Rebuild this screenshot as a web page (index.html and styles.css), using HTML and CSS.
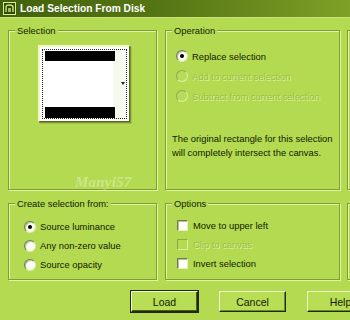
FILE: index.html
```
<!DOCTYPE html>
<html>
<head>
<meta charset="utf-8">
<link rel="stylesheet" href="styles.css">
</head>
<body>
<div class="window">
  <div class="titlebar">
    <svg class="ticon" width="13" height="13" viewBox="0 0 13 13">
      <rect x="0.5" y="0.5" width="12" height="12" fill="#2e4a08" stroke="#d8ee90"/>
      <path d="M3 10 V5 Q3 3 6.5 3 Q10 3 10 5 V10" fill="none" stroke="#cfe680" stroke-width="1.4"/>
      <rect x="5" y="6" width="3" height="4" fill="#9fc040"/>
    </svg>
    <span class="ttext">Load Selection From Disk</span>
  </div>
  <div class="groups">
    <div class="group g-sel">
      <span class="legend">Selection</span>
      <div class="preview">
        <div class="pv-inner">
          <div class="bar"></div>
          <div class="bar"></div>
          <span class="arrow"></span>
        </div>
      </div>
      <span class="watermark">Manyi57</span>
    </div>
    <div class="group g-op">
      <span class="legend">Operation</span>
      <div class="opts op-list">
        <div class="row"><span class="radio on"></span>Replace selection</div>
        <div class="row dis"><span class="radio off"></span>Add to current selection</div>
        <div class="row dis"><span class="radio off"></span>Subtract from current selection</div>
      </div>
      <p class="note">The original rectangle for this selection<br>will completely intersect the canvas.</p>
    </div>
    <div class="group g-extra"></div>
    <div class="group g-src">
      <span class="legend">Create selection from:</span>
      <div class="opts src-list">
        <div class="row"><span class="radio on"></span>Source luminance</div>
        <div class="row"><span class="radio"></span>Any non-zero value</div>
        <div class="row"><span class="radio"></span>Source opacity</div>
      </div>
    </div>
    <div class="group g-opt">
      <span class="legend">Options</span>
      <div class="opts chk-list">
        <div class="row"><span class="check"></span>Move to upper left</div>
        <div class="row dis"><span class="check off"></span>Clip to canvas</div>
        <div class="row"><span class="check"></span>Invert selection</div>
      </div>
    </div>
    <div class="group g-extra"></div>
  </div>
  <div class="buttons">
    <button class="btn default">Load</button>
    <button class="btn">Cancel</button>
    <button class="btn">Help</button>
  </div>
</div>
</body>
</html>
```
FILE: styles.css
```
html, body {
  margin: 0;
  padding: 0;
}
body {
  width: 350px;
  height: 320px;
  overflow: hidden;
  background: #b3da50;
  font-family: "Liberation Sans", Arial, sans-serif;
  font-size: 9.4px;
  color: #111a00;
}
.window {
  width: 350px;
  height: 320px;
  overflow: hidden;
}
.titlebar {
  height: 17px;
  border-bottom: 1px solid #c8e478;
  background: linear-gradient(to right, #41600c 0%, #587816 50%, #7fa026 100%);
  display: flex;
  align-items: center;
  padding-left: 3px;
  gap: 4px;
}
.ticon {
  display: block;
}
.ttext {
  color: #ffffff;
  font-weight: bold;
  font-size: 10.2px;
  letter-spacing: 0;
}
.groups {
  display: grid;
  grid-template-columns: 149px 175px 175px;
  grid-template-rows: 160px 77px;
  column-gap: 8px;
  row-gap: 13px;
  padding: 12px 0 0 8px;
  width: 600px;
}
.g-extra {
  margin-left: -1px;
}
.group {
  position: relative;
  border: 1px solid #809e36;
  box-shadow: inset 1px 1px 0 #e2f3a6, 1px 1px 0 #e2f3a6;
  box-sizing: border-box;
}
.legend {
  position: absolute;
  top: -6px;
  left: 6px;
  padding: 0 2px;
  background: #b3da50;
  line-height: 11px;
  white-space: nowrap;
}
.preview {
  margin: 14px 0 0 29px;
  width: 92px;
  height: 77px;
  box-sizing: border-box;
  background: #ffffff;
  border-top: 2px solid #eef8c6;
  border-left: 2px solid #eef8c6;
  border-right: 1px solid #55681e;
  border-bottom: 1px solid #55681e;
  box-shadow: 1px 1px 0 #7d9436, 2px 2px 0 #a2c04a;
  padding: 2px;
}
.pv-inner {
  position: relative;
  height: 100%;
  box-sizing: border-box;
  border: 1px dotted #222;
  padding: 1px 11px 0 2px;
  display: flex;
  flex-direction: column;
  justify-content: space-between;
  background: linear-gradient(to right, #fff 0, #fff 84%, #f6f9ee 84%);
}
.bar {
  height: 10px;
  background: #000;
}
.bar + .bar {
  height: 11px;
}
.arrow {
  position: absolute;
  right: 1px;
  top: 32px;
  width: 0;
  height: 0;
  border-left: 2px solid transparent;
  border-right: 2px solid transparent;
  border-top: 3px solid #222;
}
.watermark {
  position: absolute;
  left: 66px;
  top: 143px;
  font-family: "Liberation Serif", serif;
  font-style: italic;
  font-weight: bold;
  font-size: 15px;
  color: rgba(255, 255, 255, 0.36);
  letter-spacing: 0.2px;
}
.opts {
  display: flex;
  flex-direction: column;
}
.row {
  display: flex;
  align-items: center;
  gap: 4px;
  white-space: nowrap;
}
.op-list {
  margin: 15px 0 0 10px;
  gap: 0;
}
.op-list .row {
  height: 20px;
}
.src-list {
  margin: 13px 0 0 15px;
}
.src-list .row {
  height: 19px;
}
.chk-list {
  margin: 12px 0 0 11px;
}
.chk-list .row {
  height: 19px;
  gap: 5px;
}
.dis {
  color: #9ebd4c;
  text-shadow: 1px 1px 0 #dcf19c;
}
.radio {
  width: 12px;
  height: 12px;
  border-radius: 50%;
  box-sizing: border-box;
  background: #fafcf2;
  border: 1px solid;
  border-color: #6f7f50 #d8ecb0 #d8ecb0 #6f7f50;
  box-shadow: inset 1px 1px 0 #b8c49c;
  position: relative;
  flex: none;
}
.radio.on::after {
  content: "";
  position: absolute;
  left: 3px;
  top: 3px;
  width: 4px;
  height: 4px;
  border-radius: 50%;
  background: #000;
}
.radio.off {
  background: #b8dc58;
  border-color: #8fa85a #d8f0a0 #d8f0a0 #8fa85a;
  box-shadow: none;
}
.check {
  width: 11px;
  height: 11px;
  box-sizing: border-box;
  background: #ffffff;
  border: 1px solid;
  border-color: #6e7e48 #e2f2b0 #e2f2b0 #6e7e48;
  box-shadow: inset 1px 1px 0 #b4c08e;
  flex: none;
}
.check.off {
  background: #b3da50;
  border-color: #8ea450 #d8f0a0 #d8f0a0 #8ea450;
  box-shadow: none;
}
.note {
  margin: 26px 0 0 6px;
  line-height: 14px;
  font-size: 9.4px;
  white-space: nowrap;
}
.buttons {
  display: flex;
  gap: 21px;
  padding: 11px 0 0 131px;
}
.btn {
  width: 67px;
  height: 21px;
  flex: none;
  background: #b8de56;
  font-family: "Liberation Sans", Arial, sans-serif;
  font-size: 10.5px;
  color: #111a00;
  border: 1px solid;
  border-color: #f2fac8 #1e2a06 #1e2a06 #f2fac8;
  box-shadow: inset -1px -1px 0 #708a2a;
  padding: 0;
}
.btn.default {
  border-color: #f2fac8 #1e2a06 #1e2a06 #f2fac8;
  box-shadow: inset -1px -1px 0 #4c5e1a, 0 0 0 1px #1e2a06;
}
```
